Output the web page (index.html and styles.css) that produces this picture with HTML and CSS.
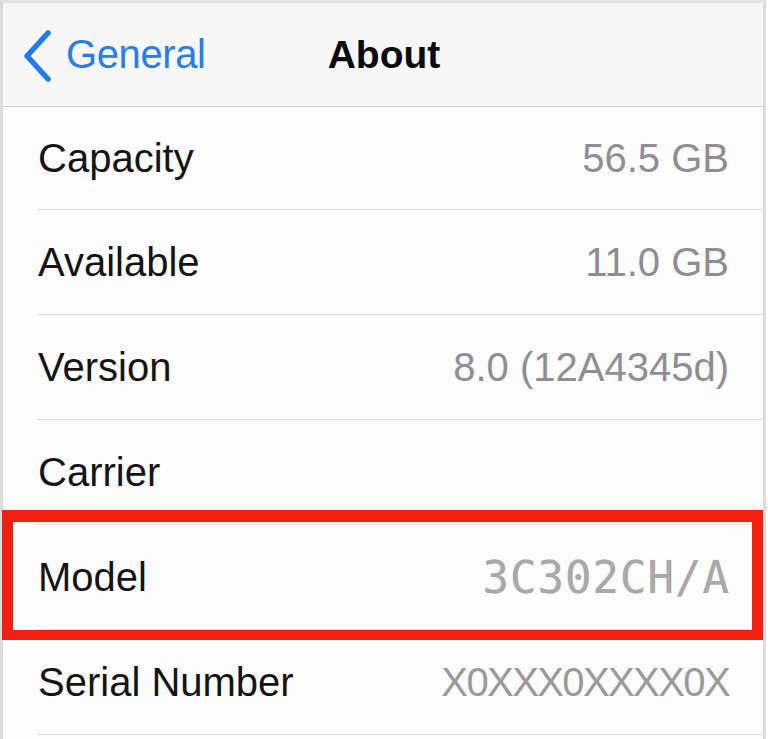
FILE: index.html
```html
<!DOCTYPE html>
<html lang="en">
<head>
<meta charset="utf-8">
<title>About</title>
<link rel="stylesheet" href="styles.css">
</head>
<body>
<div class="frame">
  <header class="nav">
    <a class="back">
      <svg class="chev" width="30" height="52" viewBox="0 0 30 52"><path d="M26 3 L5 26 L26 49" fill="none" stroke="#1f7bf2" stroke-width="5.5" stroke-linecap="round" stroke-linejoin="round"/></svg>
      <span class="back-label">General</span>
    </a>
    <h1 class="title">About</h1>
  </header>
  <ul class="list">
    <li class="row first"><span class="label">Capacity</span><span class="value">56.5 GB</span></li>
    <li class="row"><span class="label">Available</span><span class="value">11.0 GB</span></li>
    <li class="row"><span class="label">Version</span><span class="value">8.0 (12A4345d)</span></li>
    <li class="row"><span class="label">Carrier</span><span class="value"></span></li>
    <li class="row"><span class="label">Model</span><span class="value model">3C302CH/A</span></li>
    <li class="row"><span class="label">Serial Number</span><span class="value serial">X0XXX0XXXX0X</span></li>
  </ul>
  <div class="highlight"></div>
</div>
</body>
</html>
```

FILE: styles.css
```css
html, body {
  margin: 0;
  padding: 0;
  background: #ffffff;
  height: 739px;
  overflow: hidden;
}
body {
  font-family: "Liberation Sans", Arial, sans-serif;
}
.frame {
  position: relative;
  width: 760px;
  height: 736px;
  border-top: 3px solid #e4e4e4;
  border-left: 3px solid #dcdcdc;
  border-right: 3px solid #dcdcdc;
  background: #fdfdfd;
}
.nav {
  position: relative;
  height: 103px;
  background: #f7f7f7;
  border-bottom: 1px solid #cfcfcf;
  display: flex;
  align-items: center;
}
.back {
  display: flex;
  align-items: center;
  gap: 14px;
  padding-left: 19px;
  color: #2a7de8;
  font-size: 40px;
  letter-spacing: -0.4px;
}
.chev {
  display: block;
  margin-top: 2px;
}
.title {
  position: absolute;
  left: 0;
  right: 0;
  top: 0;
  bottom: 0;
  margin: 0;
  display: flex;
  align-items: center;
  justify-content: center;
  font-size: 39px;
  font-weight: bold;
  color: #0a0a0a;
  padding-left: 2px;
  pointer-events: none;
}
.list {
  list-style: none;
  margin: 0;
  padding: 0 0 0 34px;
}
.row {
  height: 104px;
  border-bottom: 1px solid #e0e0e0;
  display: flex;
  align-items: center;
  justify-content: space-between;
  padding-right: 34px;
  font-size: 40px;
}
.row.first {
  height: 102px;
}
.label {
  color: #151515;
  padding-left: 1px;
}
.value {
  color: #8e8e93;
}
.value.model {
  font-family: "DejaVu Sans Mono", monospace;
  font-size: 44px;
  letter-spacing: 1px;
  color: #a9a9a9;
  margin-right: -1px;
  text-shadow: 0 0 1px rgba(160,160,160,0.6);
}
.value.serial {
  color: #9a9a9a;
  letter-spacing: -1.6px;
}
.highlight {
  position: absolute;
  left: -1px;
  top: 507px;
  width: 739px;
  height: 108px;
  border: 11px solid #f2200f;
  border-top-width: 12px;
  border-bottom-width: 10px;
}
```
